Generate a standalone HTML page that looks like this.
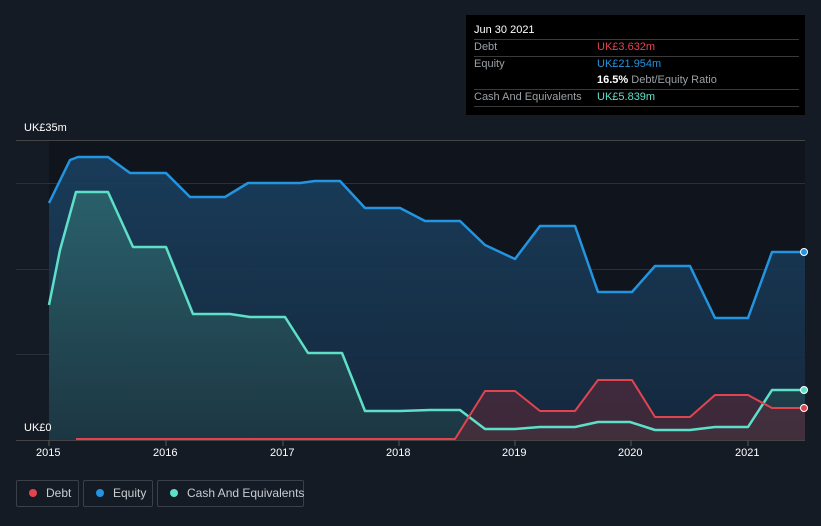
<!DOCTYPE html>
<html><head><meta charset="utf-8"><style>
body{margin:0;width:821px;height:526px;background:#151b25;font-family:"Liberation Sans",sans-serif;overflow:hidden;position:relative}
.tt{position:absolute;left:466px;top:15px;width:339px;height:100px;background:#000;color:#fff;font-size:11px}
.row{position:absolute;left:8px;right:6px;height:17px;line-height:17px;border-bottom:1px solid #3a3a3a}
.row span{position:absolute;left:123px}
.lab{color:#9aa0a6}
.lg{position:absolute;top:480px;height:27px;border:1px solid #3a404a;border-radius:2px;color:#c9ccd1;font-size:12px;line-height:25px;box-sizing:border-box;white-space:nowrap}
.lg i{display:inline-block;width:8px;height:8px;border-radius:50%;margin:0 9px 0 12px;vertical-align:0px}
.ax{position:absolute;color:#fff;font-size:11px}
</style></head><body>
<svg width="821" height="526" style="position:absolute;left:0;top:0">
<defs>
<linearGradient id="ge" x1="0" y1="0" x2="0" y2="1"><stop offset="0" stop-color="#1a4060" stop-opacity=".9"/><stop offset="1" stop-color="#152a40" stop-opacity=".9"/></linearGradient>
<linearGradient id="gc" x1="0" y1="0" x2="0" y2="1"><stop offset="0" stop-color="#2e6a70" stop-opacity=".8"/><stop offset="1" stop-color="#1e3a44" stop-opacity=".8"/></linearGradient>
</defs>
<rect x="49" y="140" width="756" height="300" fill="#10141c"/>
<g stroke="#2a303a" stroke-width="1">
<line x1="16" y1="140.5" x2="805" y2="140.5" stroke="#444"/>
<line x1="16" y1="183.5" x2="805" y2="183.5"/>
<line x1="16" y1="269.5" x2="805" y2="269.5"/>
<line x1="16" y1="354.5" x2="805" y2="354.5"/>
<line x1="16" y1="440.5" x2="805" y2="440.5" stroke="#444"/>
</g>
<path d="M49,203 L70,160 L78,157 L108,157 L130,173 L166,173 L190,197 L225,197 L248,183 L300,183 L315,181 L340,181 L365,208 L400,208 L425,221 L460,221 L485,245 L515,259 L540,226 L575,226 L598,292 L632,292 L655,266 L690,266 L715,318 L748,318 L772,252 L805,252 L805,440 L49,440Z" fill="url(#ge)"/>
<path d="M49,305 L60,250 L76,192 L108,192 L133,247 L166,247 L193,314 L230,314 L250,317 L285,317 L308,353 L342,353 L365,411 L400,411 L430,410 L460,410 L485,429 L515,429 L540,427 L575,427 L598,422 L630,422 L655,430 L690,430 L715,427 L748,427 L772,390 L805,390 L805,440 L49,440Z" fill="url(#gc)"/>
<path d="M455,439 L485,391 L515,391 L540,411 L575,411 L598,380 L632,380 L655,417 L690,417 L715,395 L748,395 L772,408 L805,408 L805,440 L455,440Z" fill="#5a2a38" fill-opacity=".6"/>
<g fill="none" stroke-width="2.5" stroke-linejoin="round">
<path d="M49,203 L70,160 L78,157 L108,157 L130,173 L166,173 L190,197 L225,197 L248,183 L300,183 L315,181 L340,181 L365,208 L400,208 L425,221 L460,221 L485,245 L515,259 L540,226 L575,226 L598,292 L632,292 L655,266 L690,266 L715,318 L748,318 L772,252 L805,252" stroke="#2394e0"/>
<path d="M49,305 L60,250 L76,192 L108,192 L133,247 L166,247 L193,314 L230,314 L250,317 L285,317 L308,353 L342,353 L365,411 L400,411 L430,410 L460,410 L485,429 L515,429 L540,427 L575,427 L598,422 L630,422 L655,430 L690,430 L715,427 L748,427 L772,390 L805,390" stroke="#5ee0c8"/>
<path d="M76,439 L455,439 L485,391 L515,391 L540,411 L575,411 L598,380 L632,380 L655,417 L690,417 L715,395 L748,395 L772,408 L805,408" stroke="#e0454f" stroke-width="2"/>
</g>
<circle cx="804" cy="252" r="3.5" fill="#2394e0" stroke="#fff" stroke-width="1"/>
<circle cx="804" cy="390" r="3.5" fill="#5ee0c8" stroke="#fff" stroke-width="1"/>
<circle cx="804" cy="408" r="3.5" fill="#e0454f" stroke="#fff" stroke-width="1"/>
<g stroke="#555"><line x1="49" y1="440" x2="49" y2="446"/><line x1="166" y1="440" x2="166" y2="446"/><line x1="283" y1="440" x2="283" y2="446"/><line x1="399" y1="440" x2="399" y2="446"/><line x1="515" y1="440" x2="515" y2="446"/><line x1="631" y1="440" x2="631" y2="446"/><line x1="748" y1="440" x2="748" y2="446"/></g>
</svg>
<div class="ax" style="left:24px;top:122px">UK£35m</div>
<div class="ax" style="left:24px;top:422px">UK£0</div>
<div class="ax" style="left:36px;top:447px">2015</div>
<div class="ax" style="left:153px;top:447px">2016</div>
<div class="ax" style="left:270px;top:447px">2017</div>
<div class="ax" style="left:386px;top:447px">2018</div>
<div class="ax" style="left:502px;top:447px">2019</div>
<div class="ax" style="left:618px;top:447px">2020</div>
<div class="ax" style="left:735px;top:447px">2021</div>
<div class="tt">
<div class="row" style="top:7px;color:#fff">Jun 30 2021</div>
<div class="row lab" style="top:24px">Debt<span style="color:#e5444e">UK£3.632m</span></div>
<div class="row lab" style="top:41px;border:none">Equity<span style="color:#2394e0">UK£21.954m</span></div>
<div class="row lab" style="top:57px"><span><b style="color:#fff">16.5%</b> Debt/Equity Ratio</span></div>
<div class="row lab" style="top:74px">Cash And Equivalents<span style="color:#5ee0c8">UK£5.839m</span></div>
</div>
<div class="lg" style="left:16px;width:63px"><i style="background:#e5444e"></i>Debt</div>
<div class="lg" style="left:83px;width:70px"><i style="background:#2394e0"></i>Equity</div>
<div class="lg" style="left:157px;width:147px"><i style="background:#5ee0c8"></i>Cash And Equivalents</div>
</body></html>
